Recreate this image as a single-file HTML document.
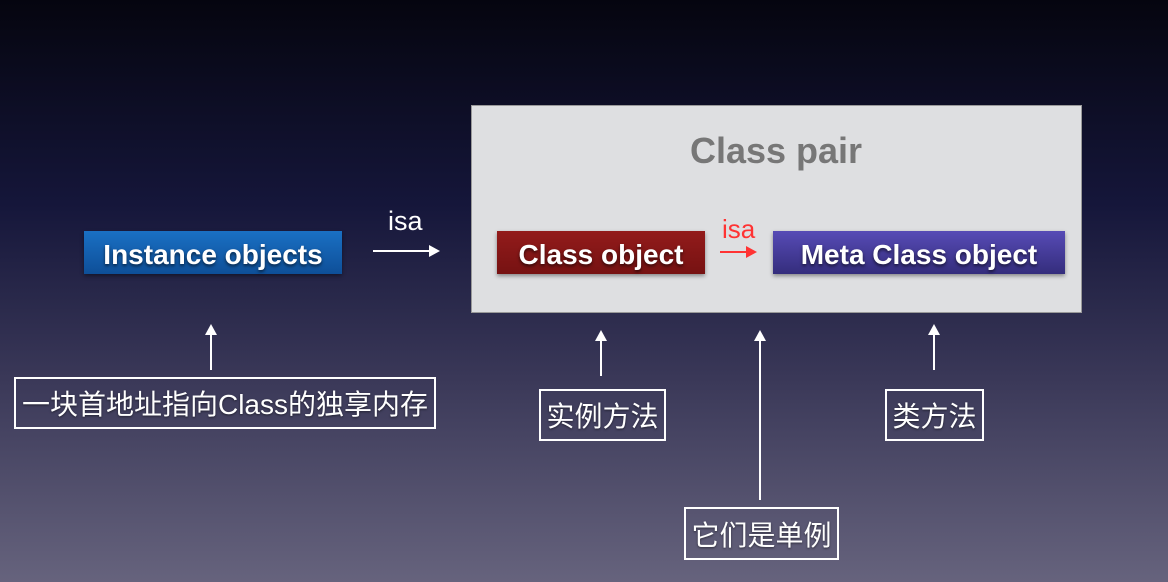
<!DOCTYPE html>
<html><head><meta charset="utf-8"><style>
body{margin:0;width:1168px;height:582px;overflow:hidden;background:linear-gradient(to bottom,#05050f 0%,#15163a 35%,#3a3858 65%,#66637d 100%);position:relative;font-family:"Liberation Sans","Noto Sans CJK SC",sans-serif}
.a{position:absolute}
.btn{position:absolute;color:#fff;font-weight:bold;font-size:28px;display:flex;align-items:center;justify-content:center;text-shadow:0 2px 3px rgba(0,0,0,.6);box-shadow:0 2px 4px rgba(0,0,0,.4);padding-top:4px;box-sizing:border-box}
.lbl{position:absolute;border:2px solid #fff;color:#fff;font-size:28px;display:flex;align-items:center;justify-content:center;box-sizing:border-box;text-shadow:0 1px 2px rgba(0,0,0,.5);white-space:nowrap}
.v{position:absolute;width:2px;background:#fff}
.v:before{content:"";position:absolute;left:-5px;top:-10px;border-left:6px solid transparent;border-right:6px solid transparent;border-bottom:11px solid #fff}
</style></head><body>
<div class="btn" style="left:84px;top:231px;width:258px;height:43px;background:linear-gradient(#1a70c4,#0e4f98)">Instance objects</div>
<div class="a" style="left:388px;top:206px;color:#fff;font-size:27px">isa</div>
<div class="a" style="left:373px;top:250px;width:58px;height:2px;background:#fff"></div>
<div class="a" style="left:429px;top:245px;border-top:6px solid transparent;border-bottom:6px solid transparent;border-left:11px solid #fff"></div>
<div class="a" style="left:471px;top:105px;width:609px;height:206px;background:#dedfe1;border:1px solid #999"></div>
<div class="a" style="left:471px;top:130px;width:610px;text-align:center;color:#777;font-weight:bold;font-size:36px">Class pair</div>
<div class="btn" style="left:497px;top:231px;width:208px;height:43px;background:linear-gradient(#931b1b,#761212)">Class object</div>
<div class="a" style="left:722px;top:214px;color:#f33;font-size:26px">isa</div>
<div class="a" style="left:720px;top:251px;width:28px;height:2px;background:#f33"></div>
<div class="a" style="left:746px;top:246px;border-top:6px solid transparent;border-bottom:6px solid transparent;border-left:11px solid #f33"></div>
<div class="btn" style="left:773px;top:231px;width:292px;height:43px;background:linear-gradient(#574bb6,#342d7c)">Meta Class object</div>
<div class="v" style="left:210px;top:334px;height:36px"></div>
<div class="lbl" style="left:14px;top:377px;width:422px;height:52px">一块首地址指向Class的独享内存</div>
<div class="v" style="left:600px;top:340px;height:36px"></div>
<div class="lbl" style="left:539px;top:389px;width:127px;height:52px">实例方法</div>
<div class="v" style="left:759px;top:340px;height:160px"></div>
<div class="lbl" style="left:684px;top:507px;width:155px;height:53px">它们是单例</div>
<div class="v" style="left:933px;top:334px;height:36px"></div>
<div class="lbl" style="left:885px;top:389px;width:99px;height:52px">类方法</div>
</body></html>
